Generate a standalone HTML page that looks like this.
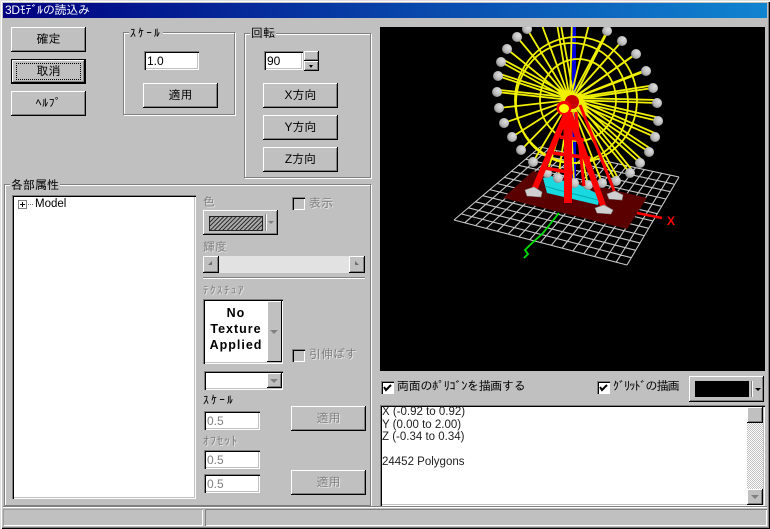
<!DOCTYPE html>
<html><head><meta charset="utf-8">
<style>
html,body{margin:0;padding:0;background:#c0c0c0}
#w{position:relative;width:770px;height:529px;overflow:hidden;background:#c0c0c0;font:12px/14px "Liberation Sans","IPAGothic",sans-serif;color:#000}
#w div,#w span.a{position:absolute;box-sizing:border-box}
.t{white-space:nowrap}
.g{color:#808080;text-shadow:1px 1px 0 #e4e4e4}
.b{background:#c0c0c0;box-shadow:inset -1px -1px #000,inset 1px 1px #fff,inset -2px -2px #808080;text-align:center;line-height:24px}
.e{background:#fff;box-shadow:inset 1px 1px #808080,inset 2px 2px #000,inset -1px -1px #fff,inset -2px -2px #c0c0c0;padding:3px 0 0 3px;line-height:14px}
.f{border:1px solid #808080;box-shadow:inset 1px 1px #fff,1px 1px #fff}
.l{background:#c0c0c0;padding:0 1px;white-space:nowrap}
.c{width:13px;height:13px;background:#fff;box-shadow:inset 1px 1px #808080,inset 2px 2px #000,inset -1px -1px #fff}
.cd{background:#c0c0c0}
.tri{width:0;height:0;border-left:4px solid transparent;border-right:4px solid transparent;border-top:4px solid #000}
</style></head><body>
<div id="w">
<div style="left:0;top:0;width:770px;height:529px;box-shadow:inset 1px 1px #e0e0e0,inset 2px 2px #fff,inset -1px -1px #000,inset -2px -2px #808080"></div>
<div class="t" style="left:3px;top:3px;width:764px;height:15px;background:linear-gradient(90deg,#000080,#1084d0);color:#fff;padding-left:2px;line-height:15px;font-size:12px;letter-spacing:-.3px">3Dﾓﾃﾞﾙの読込み</div>

<div class="b" style="left:11px;top:27px;width:75px;height:25px">確定</div>
<div class="b" style="left:11px;top:59px;width:75px;height:25px;box-shadow:inset -2px -2px #000,inset 1px 1px #000,inset 2px 2px #fff,inset -3px -3px #808080">取消</div>
<div style="left:16px;top:63px;width:65px;height:17px;border:1px dotted #000"></div>
<div class="b" style="left:11px;top:91px;width:75px;height:25px;letter-spacing:.6px">ﾍﾙﾌﾟ</div>

<div class="f" style="left:123px;top:32px;width:112px;height:83px"></div>
<div class="l" style="left:129px;top:26px;letter-spacing:2px">ｽｹｰﾙ</div>
<div class="e" style="left:144px;top:51px;width:55px;height:19px">1.0</div>
<div class="b" style="left:143px;top:83px;width:75px;height:25px">適用</div>

<div class="f" style="left:244px;top:33px;width:127px;height:145px"></div>
<div class="l" style="left:250px;top:26px">回転</div>
<div class="e" style="left:264px;top:51px;width:39px;height:19px">90</div>
<div class="b" style="left:304px;top:51px;width:15px;height:10px"></div>
<div class="b" style="left:304px;top:61px;width:15px;height:10px"></div>
<div class="tri" style="left:309px;top:55px;border-width:0 2.5px 3px;border-color:transparent transparent #000"></div>
<div class="tri" style="left:309px;top:65px;border-width:3px 2.5px 0"></div>
<div class="b" style="left:263px;top:83px;width:75px;height:25px">X方向</div>
<div class="b" style="left:263px;top:115px;width:75px;height:25px">Y方向</div>
<div class="b" style="left:263px;top:147px;width:75px;height:25px">Z方向</div>

<div class="f" style="left:4px;top:184px;width:367px;height:322px"></div>
<div class="l" style="left:10px;top:178px">各部属性</div>
<div class="e" style="left:12px;top:195px;width:184px;height:304px"></div>
<div style="left:18px;top:200px;width:9px;height:9px;border:1px solid #808080;background:#fff"></div>
<div style="left:20px;top:204px;width:5px;height:1px;background:#000"></div>
<div style="left:22px;top:202px;width:1px;height:5px;background:#000"></div>
<div style="left:28px;top:204px;width:5px;height:1px;border-top:1px dotted #808080"></div>
<div class="t" style="left:35px;top:197px;font-size:11.5px">Model</div>

<div class="t g" style="left:203px;top:195px">色</div>
<div class="b" style="left:203px;top:210px;width:75px;height:25px"></div>
<div style="left:209px;top:216px;width:54px;height:15px;border:1px solid #222;background:repeating-linear-gradient(135deg,#333 0 1px,#aaa 1px 3px)"></div>
<div style="left:265px;top:214px;width:1px;height:17px;background:#808080;box-shadow:1px 0 #fff"></div>
<div class="tri" style="left:268px;top:221px;border-width:3px 3px 0;border-top-color:#808080"></div>
<div class="c cd" style="left:292px;top:197px"></div>
<div class="t g" style="left:309px;top:196px">表示</div>
<div class="t g" style="left:203px;top:240px">輝度</div>
<div style="left:203px;top:256px;width:162px;height:17px;background:#e2e2e2"></div>
<div class="b" style="left:203px;top:256px;width:16px;height:17px"></div>
<div class="b" style="left:349px;top:256px;width:16px;height:17px"></div>
<div class="tri" style="left:208px;top:261px;border-width:4px 4px 4px 0;border-color:transparent #707070 transparent transparent"></div>
<div class="tri" style="left:355px;top:261px;border-width:4px 0 4px 4px;border-color:transparent transparent transparent #707070"></div>
<div style="left:203px;top:277px;width:162px;height:2px;background:#808080;border-bottom:1px solid #fff"></div>
<div class="t g" style="left:203px;top:284px;font-size:11px;letter-spacing:1.5px">ﾃｸｽﾁｭｱ</div>

<div class="e" style="left:203px;top:299px;width:80px;height:65px"></div>
<div class="b" style="left:267px;top:301px;width:15px;height:61px;box-shadow:inset -1px -1px #000,inset 1px 1px #fff"></div>
<div class="tri" style="left:270px;top:330px;border-top-color:#808080"></div>
<div class="t" style="left:205px;top:305px;width:62px;text-align:center;font-weight:bold;letter-spacing:1px;line-height:16px;font-size:12.5px">No<br>Texture<br>Applied</div>
<div class="c cd" style="left:292px;top:349px"></div>
<div class="t g" style="left:309px;top:347px;font-size:12px">引伸ばす</div>
<div class="e" style="left:204px;top:371px;width:79px;height:19px"></div>
<div class="b" style="left:267px;top:373px;width:15px;height:15px"></div>
<div class="tri" style="left:270px;top:379px;border-top-color:#808080"></div>
<div class="t" style="left:203px;top:393px;letter-spacing:2px">ｽｹｰﾙ</div>
<div class="e g" style="left:204px;top:411px;width:56px;height:19px;text-shadow:none">0.5</div>
<div class="b g" style="left:291px;top:406px;width:75px;height:25px">適用</div>
<div class="t g" style="left:203px;top:434px;letter-spacing:1px">ｵﾌｾｯﾄ</div>
<div class="e g" style="left:204px;top:450px;width:56px;height:19px;text-shadow:none">0.5</div>
<div class="e g" style="left:204px;top:474px;width:56px;height:19px;text-shadow:none">0.5</div>
<div class="b g" style="left:291px;top:470px;width:75px;height:25px">適用</div>

<div style="left:380px;top:27px;width:385px;height:344px;background:#000;overflow:hidden">
<svg xmlns="http://www.w3.org/2000/svg" width="385" height="344" viewBox="380 27 385 344" style="display:block">
<defs><radialGradient id="gd" cx=".65" cy=".35" r=".8"><stop offset="0" stop-color="#dedede"/><stop offset=".6" stop-color="#b8b8b8"/><stop offset="1" stop-color="#6c6c6c"/></radialGradient></defs>
<path fill="none" stroke="#c8c8c8" stroke-width="1.1" d="M454 220L540 147M464.8 222.8L548.7 148.9M475.6 225.6L557.4 150.8M486.4 228.4L566.1 152.6M497.3 231.3L574.8 154.5M508.1 234.1L583.4 156.4M518.9 236.9L592.1 158.3M529.7 239.7L600.8 160.1M540.5 242.5L609.5 162M551.3 245.3L618.2 163.9M562.1 248.1L626.9 165.8M572.9 250.9L635.6 167.6M583.8 253.8L644.3 169.5M594.6 256.6L652.9 171.4M605.4 259.4L661.6 173.3M616.2 262.2L670.3 175.1M627 265L679 177M454 220L627 265M461.2 213.9L631.3 257.7M468.3 207.8L635.7 250.3M475.5 201.8L640 243M482.7 195.7L644.3 235.7M489.8 189.6L648.7 228.3M497 183.5L653 221M504.2 177.4L657.3 213.7M511.3 171.3L661.7 206.3M518.5 165.3L666 199M525.7 159.2L670.3 191.7M532.8 153.1L674.7 184.3M540 147L679 177"/>
<polygon points="503,198 533,171 647,198 627,229" fill="#5a0000"/>
<path d="M637 213L662 218" stroke="#f00" stroke-width="2.5"/>
<path d="M559 213L543 233L529 246L525 250L528 254L524 258" fill="none" stroke="#00e000" stroke-width="1.8"/>
<text x="667" y="225" fill="#f00" font-family="Liberation Sans" font-weight="bold" font-size="12">X</text>
<rect x="572" y="27" width="4" height="165" fill="#0000e0"/>
<polygon points="543,178 552,176 560,181 570,180 600,195 598,205 547,193" fill="#18d8e0"/>
<path d="M545 186L558 190L598 200" stroke="#0aa" fill="none"/>
<g fill="none" stroke="#f0f000" stroke-width="1.8">
<ellipse cx="576" cy="100" rx="61" ry="63"/>
<ellipse cx="572" cy="103" rx="56" ry="60"/>
<ellipse cx="578" cy="100" rx="38" ry="41"/>
<path d="M570 100L527 29M570 100L517 37M570 100L507 49M570 100L501 62M570 100L498 76M570 100L497 92M570 100L499 108M570 100L504 123M570 100L512 137M570 100L521 150M570 100L533 162M570 100L547 173M570 100L558 178M570 100L574 183M570 100L588 185M570 100L602 183M570 100L616 181M570 100L630 173M570 100L640 163M570 100L649 152M570 100L655 137M570 100L658 121M570 100L657 103M570 100L653 88M570 100L646 71M570 100L636 54M570 100L622 41M570 100L607 31M570 100L590 20M570 100L572 17M570 100L556 18M570 100L540 20"/>
<path d="M574 98L504 60M574 98L500 74M574 98L500 90M574 98L655 85M574 98L659 100M574 98L660 118M574 98L657 134M574 98L651 149M574 98L642 160M574 98L632 170M574 98L618 178M574 98L648 69M574 98L638 52M574 98L609 29M574 98L560 20"/>
</g>
<g fill="url(#gd)">
<circle cx="527" cy="29" r="5"/><circle cx="517" cy="37" r="5"/><circle cx="507" cy="49" r="5"/><circle cx="501" cy="62" r="5"/><circle cx="498" cy="76" r="5"/><circle cx="497" cy="92" r="5"/><circle cx="499" cy="108" r="5"/><circle cx="504" cy="123" r="5"/><circle cx="512" cy="137" r="5"/><circle cx="521" cy="150" r="5"/><circle cx="533" cy="162" r="5"/><circle cx="547" cy="173" r="5"/><circle cx="558" cy="178" r="5"/><circle cx="574" cy="183" r="5"/><circle cx="588" cy="185" r="5"/><circle cx="602" cy="183" r="5"/><circle cx="616" cy="181" r="5"/><circle cx="630" cy="173" r="5"/><circle cx="640" cy="163" r="5"/><circle cx="649" cy="152" r="5"/><circle cx="655" cy="137" r="5"/><circle cx="658" cy="121" r="5"/><circle cx="657" cy="103" r="5"/><circle cx="653" cy="88" r="5"/><circle cx="646" cy="71" r="5"/><circle cx="636" cy="54" r="5"/><circle cx="622" cy="41" r="5"/><circle cx="607" cy="31" r="5"/>
</g>
<g fill="none" stroke="#f00">
<path stroke-width="3" d="M576 112L584 186M580 105L615 193"/>
<path stroke-width="3.5" d="M545 168L573 173M553 153L590 158M560 137L584 140"/>
<path stroke-width="6" d="M566 115L534 190M570 115L604 208"/>
<path stroke-width="9" d="M568 112L568 140"/>
<path stroke-width="8" d="M568 135L568 203"/>
</g>
<g fill="#d0d0d0" stroke="#888" stroke-width=".6">
<polygon points="525,190 534,187 542,192 541,197 527,196"/><polygon points="595,208 604,205 613,210 611,214 597,213"/><polygon points="607,194 615,191 623,195 622,200 609,199"/>
</g>
<path d="M563 104L573 97L577 103L568 113Z" fill="#c00000"/>
<ellipse cx="572" cy="102" rx="7" ry="7" fill="#c80000"/>
<ellipse cx="564" cy="108" rx="7.5" ry="7" fill="#f00"/>
<ellipse cx="564" cy="108.500" rx="5" ry="4.500" fill="#ff0"/>
</svg>
</div>

<div class="c" style="left:381px;top:381px"></div>
<svg xmlns="http://www.w3.org/2000/svg" width="13" height="13" style="position:absolute;left:381px;top:381px"><path d="M3 6L5 9L10 4" fill="none" stroke="#000" stroke-width="2"/></svg>
<div class="t" style="left:397px;top:379px;letter-spacing:-.3px">両面のﾎﾟﾘｺﾞﾝを描画する</div>
<div class="c" style="left:597px;top:381px"></div>
<svg xmlns="http://www.w3.org/2000/svg" width="13" height="13" style="position:absolute;left:597px;top:381px"><path d="M3 6L5 9L10 4" fill="none" stroke="#000" stroke-width="2"/></svg>
<div class="t" style="left:613px;top:379px;letter-spacing:-.9px">ｸﾞﾘｯﾄﾞの描画</div>
<div class="b" style="left:689px;top:376px;width:75px;height:26px"></div>
<div style="left:695px;top:381px;width:54px;height:16px;background:#000"></div>
<div style="left:751px;top:381px;width:1px;height:16px;background:#808080;box-shadow:1px 0 #fff"></div>
<div class="tri" style="left:755px;top:388px;border-width:3px 3px 0"></div>

<div class="e" style="left:380px;top:405px;width:385px;height:101px"></div>
<div class="t" style="left:382px;top:406px;line-height:12.5px;font-size:11.5px;color:#222">X (-0.92 to 0.92)<br>Y (0.00 to 2.00)<br>Z (-0.34 to 0.34)<br><br>24452 Polygons</div>
<div style="left:747px;top:407px;width:16px;height:98px;background:conic-gradient(#fff 25%,#c0c0c0 0 50%,#fff 0 75%,#c0c0c0 0) 0 0/2px 2px"></div>
<div class="b" style="left:747px;top:407px;width:16px;height:16px"></div>
<div class="b" style="left:747px;top:489px;width:16px;height:16px"></div>
<div class="tri" style="left:751px;top:413px;border-width:0 4px 4px;border-color:transparent transparent #808080"></div>
<div class="tri" style="left:751px;top:495px;border-top-color:#808080"></div>

<div style="left:3px;top:506px;width:764px;height:2px;background:#808080;border-bottom:1px solid #fff"></div>
<div style="left:3px;top:509px;width:200px;height:17px;box-shadow:inset 1px 1px #a0a0a0,inset -1px -1px #fff"></div>
<div style="left:205px;top:509px;width:562px;height:17px;box-shadow:inset 1px 1px #808080,inset -1px -1px #fff"></div>
</div>
</body></html>
